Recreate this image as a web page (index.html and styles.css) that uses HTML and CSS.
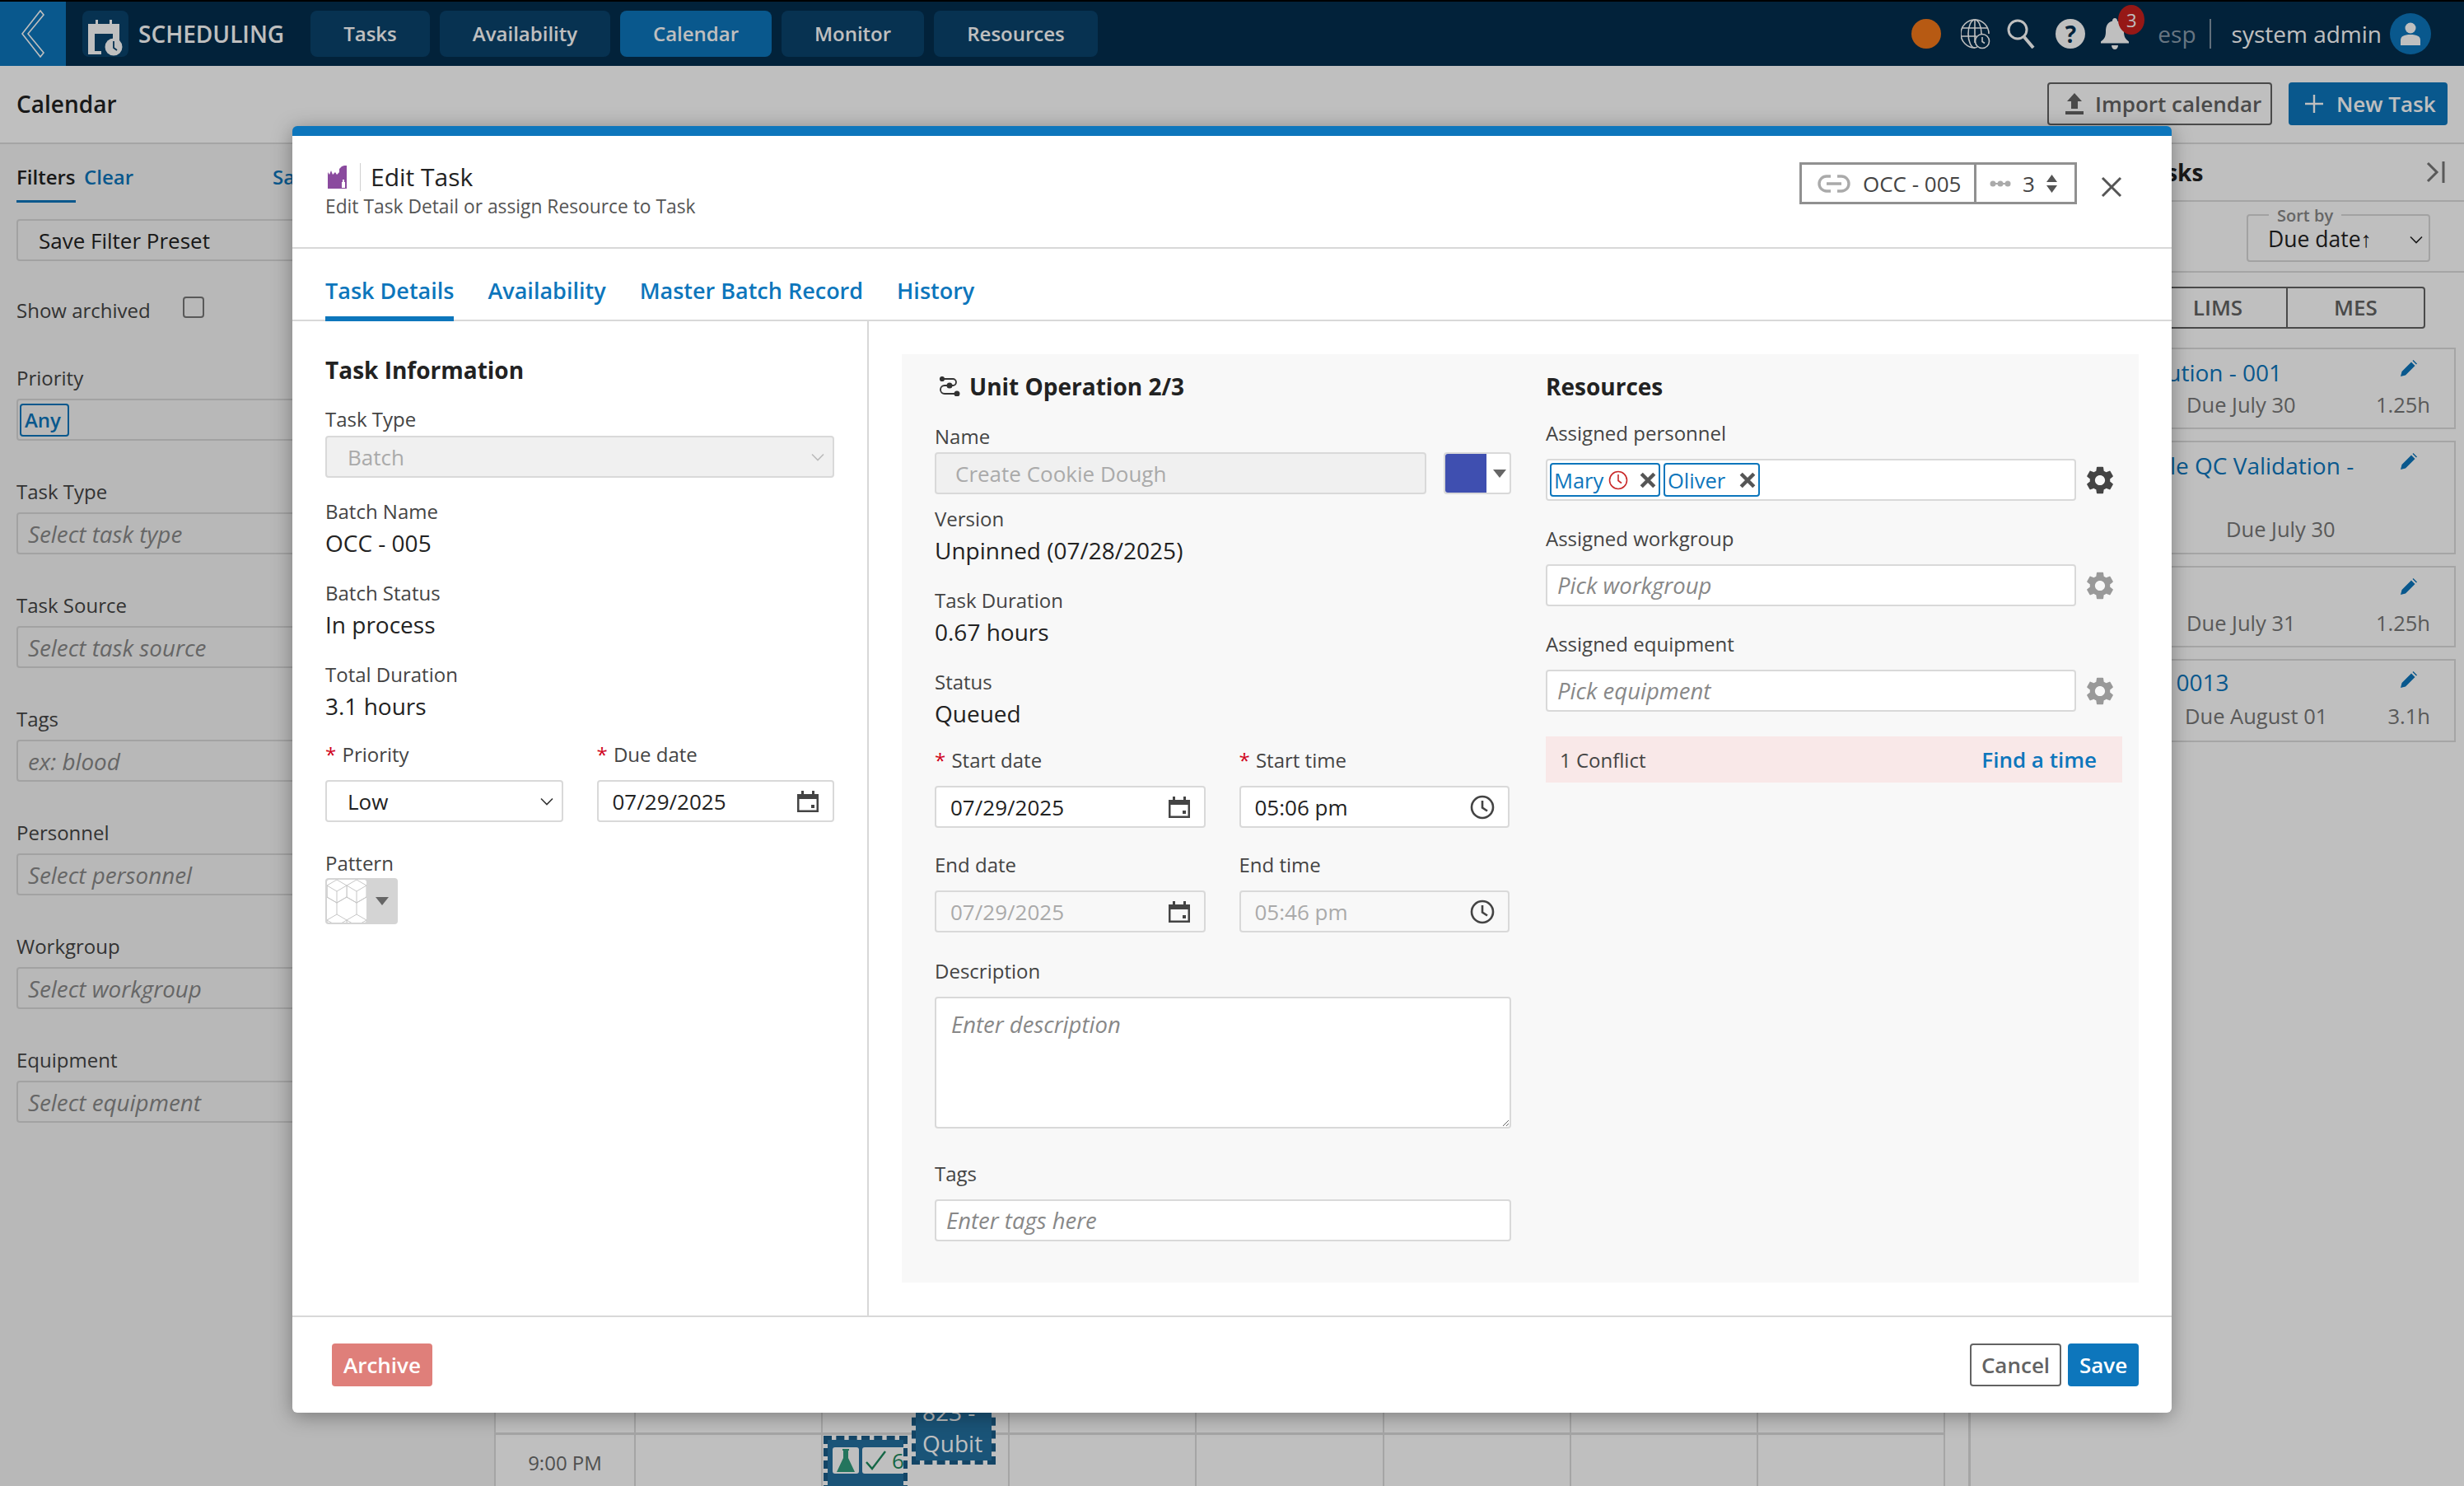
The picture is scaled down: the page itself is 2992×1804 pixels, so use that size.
FILE: index.html
```html
<!DOCTYPE html>
<html lang="en">
<head>
    <meta charset="UTF-8">
    <meta name="viewport" content="width=device-width, initial-scale=1.0">
    <title>Scheduling - Calendar</title>
    <link rel="stylesheet" href="styles.css">
</head>
<body>
    <svg class="defs" width="0" height="0">
        <symbol id="gear" viewBox="2.4 2 19.2 20"><path d="M19.14 12.94c.04-.3.06-.61.06-.94 0-.32-.02-.64-.07-.94l2.03-1.58a.49.49 0 0 0 .12-.61l-1.92-3.32a.488.488 0 0 0-.59-.22l-2.39.96c-.5-.38-1.03-.7-1.62-.94l-.36-2.54a.484.484 0 0 0-.48-.41h-3.84c-.24 0-.43.17-.47.41l-.36 2.54c-.59.24-1.13.57-1.62.94l-2.39-.96c-.22-.08-.47 0-.59.22L2.74 8.87c-.12.21-.08.47.12.61l2.03 1.58c-.05.3-.09.63-.09.94s.02.64.07.94l-2.03 1.58a.49.49 0 0 0-.12.61l1.92 3.32c.12.22.37.29.59.22l2.39-.96c.5.38 1.03.7 1.62.94l.36 2.54c.05.24.24.41.48.41h3.84c.24 0 .44-.17.47-.41l.36-2.54c.59-.24 1.13-.56 1.62-.94l2.39.96c.22.08.47 0 .59-.22l1.92-3.32c.12-.22.07-.47-.12-.61l-2.01-1.58zM12 15.6c-1.98 0-3.6-1.62-3.6-3.6s1.62-3.6 3.6-3.6 3.6 1.62 3.6 3.6-1.62 3.6-3.6 3.6z" fill="currentColor"/></symbol>
        <symbol id="cal" viewBox="0 0 28 28"><path d="M1 5h5V1h3v4h10V1h3v4h5v22H1zM3.5 11v13.5h21V11zM18 18h4v4h-4z" fill="currentColor" fill-rule="evenodd"/></symbol>
        <symbol id="clock" viewBox="0 0 30 30"><circle cx="15" cy="15" r="13" fill="none" stroke="currentColor" stroke-width="2.6"/><path d="M15 7v8.5l6 4" fill="none" stroke="currentColor" stroke-width="2.6"/></symbol>
        <symbol id="chev" viewBox="0 0 16 10"><path d="M1 1.5l7 7 7-7" fill="none" stroke="currentColor" stroke-width="1.6"/></symbol>
        <symbol id="cross" viewBox="1 1 18 18"><path d="M3 3l14 14M17 3L3 17" fill="none" stroke="currentColor" stroke-width="4"/></symbol>
        <symbol id="pencil" viewBox="0 0 20 20"><path d="M0 20l1.5-6L13 2.5l4.5 4.5L6 18.5zM14.5 1l1-1L20 4.500l-1 1z" fill="currentColor"/></symbol>
    </svg>

    <div class="page">
        <header class="topbar">
            <div class="back">
                <svg width="30" height="58" viewBox="0 0 30 58"><path d="M24 1l4 5L9 29l19 23-4 5L2 29z" fill="none" stroke="#fff" stroke-width="1.6"/></svg>
            </div>
            <div class="app-icon">
                <svg width="42" height="44" viewBox="0 0 42 44"><path d="M9 0h3v5h14V0h3v5h9v20h-8V17H8v21h8v4H0V5h9z" fill="#fff"/><circle cx="31" cy="33" r="10.500" fill="#fff"/><path d="M31 26v8l4 3" fill="none" stroke="#0a436d" stroke-width="1.800"/></svg>
            </div>
            <div class="app-name">SCHEDULING</div>
            <nav class="nav">
                <a class="nav-tab tab-tasks">Tasks</a>
                <a class="nav-tab tab-avail">Availability</a>
                <a class="nav-tab tab-cal active">Calendar</a>
                <a class="nav-tab tab-mon">Monitor</a>
                <a class="nav-tab tab-res">Resources</a>
            </nav>
            <div class="top-right">
                <span class="status-dot"></span>
                <svg class="top-icon globe" width="36" height="38" viewBox="0 0 36 38" fill="none" stroke="#fff" stroke-width="1.6"><path d="M17 36A17 17 0 1 1 34 19"/><ellipse cx="17" cy="19" rx="8" ry="17"/><path d="M17 2v28M2 12h30M1 22h18"/><circle cx="26" cy="28" r="8.5" fill="#032e4e"/><path d="M26 23v5.500l3 2"/></svg>
                <svg class="top-icon search" width="34" height="36" viewBox="0 0 34 36" fill="none" stroke="#fff" stroke-width="3"><circle cx="13" cy="13" r="11"/><path d="M21 22l11 13" stroke-width="4"/></svg>
                <span class="help">?</span>
                <div class="bell">
                    <svg width="34" height="38" viewBox="0 0 34 38"><path d="M17 0c2 0 3 1.500 3 3.500 6 1.500 8 6 8 13 0 6 2 9 6 12v2H0v-2c4-3 6-6 6-12 0-7 2-11.500 8-13C14 1.500 15 0 17 0zM13 33h8c0 3-2 5-4 5s-4-2-4-5z" fill="#fff"/></svg>
                    <span class="badge">3</span>
                </div>
                <span class="lang">esp</span>
                <span class="user">system admin</span>
                <span class="avatar">
                    <svg width="26" height="30" viewBox="0 0 26 30"><circle cx="13" cy="8" r="6.500" fill="#fff"/><path d="M1 29V23c0-5 4-7 12-7s12 2 12 7v6z" fill="#fff"/></svg>
                </span>
            </div>
        </header>

        <div class="subhead">
            <h1>Calendar</h1>
            <div class="subhead-actions">
                <button class="btn-outline">
                    <svg width="22" height="26" viewBox="0 0 22 26"><path d="M11 0l9 10h-5v9H7v-9H2zM0 22h22v4H0z" fill="currentColor"/></svg>
                    Import calendar
                </button>
                <button class="btn-primary">
                    <svg width="22" height="22" viewBox="0 0 22 22"><path d="M11 0v22M0 11h22" stroke="#fff" stroke-width="2.400"/></svg>
                    New Task
                </button>
            </div>
        </div>

        <div class="main">
            <aside class="filters">
                <div class="filters-head">
                    <span class="filters-tab">Filters</span>
                    <a class="link">Clear</a>
                    <a class="link save-link">Save</a>
                </div>
                <div class="filter-box preset">Save Filter Preset</div>
                <div class="show-archived"><span>Show archived</span><span class="checkbox"></span></div>
                <div class="filter"><label>Priority</label><div class="filter-box"><span class="any">Any</span></div></div>
                <div class="filter"><label>Task Type</label><div class="filter-box ph">Select task type</div></div>
                <div class="filter"><label>Task Source</label><div class="filter-box ph">Select task source</div></div>
                <div class="filter"><label>Tags</label><div class="filter-box ph">ex: blood</div></div>
                <div class="filter"><label>Personnel</label><div class="filter-box ph">Select personnel</div></div>
                <div class="filter"><label>Workgroup</label><div class="filter-box ph">Select workgroup</div></div>
                <div class="filter"><label>Equipment</label><div class="filter-box ph">Select equipment</div></div>
            </aside>

            <section class="calendar">
                <div class="cal-grid">
                    <div class="cal-row tall">
                        <div class="cal-cell"></div><div class="cal-cell"></div><div class="cal-cell"></div><div class="cal-cell"></div>
                        <div class="cal-cell"></div><div class="cal-cell"></div><div class="cal-cell"></div><div class="cal-cell"></div>
                    </div>
                    <div class="cal-row short">
                        <div class="cal-cell time">9:00 PM</div><div class="cal-cell"></div><div class="cal-cell"></div><div class="cal-cell"></div>
                        <div class="cal-cell"></div><div class="cal-cell"></div><div class="cal-cell"></div><div class="cal-cell"></div>
                    </div>
                    <div class="event event-qubit">823 -<br>Qubit</div>
                    <div class="event event-check">
                        <span class="event-tag flask">
                            <svg width="22" height="28" viewBox="0 0 22 28"><path d="M7 0h8v2h-1v9l8 17H0l8-17V2H7z" fill="#2f9c7c"/></svg>
                        </span>
                        <span class="event-tag check">
                            <svg width="26" height="24" viewBox="0 0 26 24"><path d="M1 14l7 8L24 1" fill="none" stroke="#1c8a5e" stroke-width="2.400"/></svg>
                            <span>6</span>
                        </span>
                    </div>
                </div>
            </section>

            <aside class="tasks">
                <div class="tasks-head"><span>Tasks</span>
                    <svg width="24" height="26" viewBox="0 0 24 26"><path d="M2 2l11 11L2 24" fill="none" stroke="#777" stroke-width="3"/><path d="M21 0v26" stroke="#777" stroke-width="3"/></svg>
                </div>
                <div class="tasks-sort">
                    <div class="sort-box">
                        <span class="sort-legend">Sort by</span>
                        <span>Due date↑</span>
                        <svg class="sort-chev" width="16" height="10"><use href="#chev"/></svg>
                    </div>
                </div>
                <div class="seg">
                    <span class="seg-item">All</span><span class="seg-item">LIMS</span><span class="seg-item">MES</span>
                </div>
                <div class="task-card">
                    <a class="task-title">Resolution - 001</a>
                    <div class="task-meta"><span class="due">Due July 30</span><span>1.25h</span></div>
                    <svg class="pencil" width="20" height="20"><use href="#pencil"/></svg>
                </div>
                <div class="task-card wrap">
                    <a class="task-title">Sample QC Validation -<br>002</a>
                    <div class="task-meta"><span class="due due-mid">Due July 30</span></div>
                    <svg class="pencil" width="20" height="20"><use href="#pencil"/></svg>
                </div>
                <div class="task-card">
                    <a class="task-title">Assay</a>
                    <div class="task-meta"><span class="due">Due July 31</span><span>1.25h</span></div>
                    <svg class="pencil" width="20" height="20"><use href="#pencil"/></svg>
                </div>
                <div class="task-card last">
                    <a class="task-title">Batch 0013</a>
                    <div class="task-meta"><span class="due due-aug">Due August 01</span><span>3.1h</span></div>
                    <svg class="pencil" width="20" height="20"><use href="#pencil"/></svg>
                </div>
            </aside>
        </div>
    </div>

    <div class="backdrop"></div>

    <div class="modal">
        <div class="modal-head">
            <div>
                <div class="modal-title">
                    <svg class="factory" width="30" height="30" viewBox="0 0 30 30"><path d="M3 9l2 3 2-5 2 5 3-3 2 3 3-3v-4l3-3 3-1h3v28H3z" fill="#8a4a9e"/><path d="M20 21h1v-3h2v3h1v7h-4z" fill="#fff"/></svg>
                    <span class="title-text">Edit Task</span>
                </div>
                <div class="modal-sub">Edit Task Detail or assign Resource to Task</div>
            </div>
            <div class="head-right">
                <div class="batch-box">
                    <div class="batch-name">
                        <svg width="40" height="22" viewBox="0 0 40 22" fill="none" stroke="#aaa" stroke-width="3.400"><path d="M16 2H11a9 9 0 0 0 0 18h5M24 2h5a9 9 0 0 1 0 18h-5M11 11h18"/></svg>
                        <span>OCC - 005</span>
                    </div>
                    <div class="batch-step">
                        <svg width="26" height="10" viewBox="0 0 26 10"><path d="M2 5h22" stroke="#aaa" stroke-width="2"/><circle cx="4" cy="5" r="3.500" fill="#aaa"/><circle cx="13" cy="5" r="3.500" fill="#aaa"/><circle cx="22" cy="5" r="3.500" fill="#aaa"/></svg>
                        <span>3</span>
                        <svg width="13" height="22" viewBox="0 0 13 22"><path d="M6.500 0L13 9H0zM0 13h13l-6.500 9z" fill="#555"/></svg>
                    </div>
                </div>
                <svg class="close" width="26" height="26" viewBox="0 0 26 26"><path d="M2 2l22 22M24 2L2 24" stroke="#555" stroke-width="3"/></svg>
            </div>
        </div>

        <div class="modal-tabs">
            <a class="modal-tab active">Task Details</a>
            <a class="modal-tab">Availability</a>
            <a class="modal-tab">Master Batch Record</a>
            <a class="modal-tab">History</a>
        </div>

        <div class="modal-body">
            <div class="info-col">
                <h3 class="info-title">Task Information</h3>
                <div class="field">
                    <label>Task Type</label>
                    <div class="control disabled select">Batch<svg class="chev" width="16" height="10"><use href="#chev"/></svg></div>
                </div>
                <div class="field"><label>Batch Name</label><div class="value">OCC - 005</div></div>
                <div class="field"><label>Batch Status</label><div class="value">In process</div></div>
                <div class="field tight"><label>Total Duration</label><div class="value">3.1 hours</div></div>
                <div class="two-col info-two">
                    <div class="field-sm">
                        <label class="gap"><i>*</i> Priority</label>
                        <div class="control select">Low<svg class="chev dark" width="16" height="10"><use href="#chev"/></svg></div>
                    </div>
                    <div class="field-sm">
                        <label class="gap"><i>*</i> Due date</label>
                        <div class="control date">07/29/2025<svg class="ic" width="28" height="28"><use href="#cal"/></svg></div>
                    </div>
                </div>
                <div class="pattern-field">
                    <label>Pattern</label>
                    <div class="pattern">
                        <svg class="pattern-swatch" width="48" height="52" viewBox="0 0 48 52">
                            <defs>
                                <pattern id="cubes" width="24" height="42" patternUnits="userSpaceOnUse">
                                    <path d="M0 7l12-7 12 7M0 7v14l12 7 12-7V7M0 7l12 7 12-7M12 14v14M12 28v14M0 49l12-7 12 7M0 21v-14M24 21l-12 7-12-7" fill="none" stroke="#c6c6c6" stroke-width="1"/>
                                </pattern>
                            </defs>
                            <rect width="48" height="52" fill="url(#cubes)"/>
                        </svg>
                        <span class="caret"></span>
                    </div>
                </div>
            </div>

            <div class="detail-panel">
                <div class="op-col">
                    <h3 class="op-title">
                        <svg width="26" height="24" viewBox="0 0 26 24" fill="none" stroke="#333" stroke-width="1.800"><path d="M1 3h16a4 4 0 0 1 0 8H7a4.500 4.500 0 0 0 0 10h14"/><circle cx="4" cy="3" r="2.200" fill="#333"/><circle cx="13" cy="11" r="2.600" fill="#333"/><circle cx="22" cy="21" r="2.600" fill="#333"/></svg>
                        Unit Operation 2/3
                    </h3>
                    <div class="op-name">
                        <label>Name</label>
                        <div class="name-row">
                            <div class="control disabled name-input">Create Cookie Dough</div>
                            <div class="color-pick"><span class="color-swatch"></span><span class="caret"></span></div>
                        </div>
                    </div>
                    <div class="op-val first"><label>Version</label><div class="value">Unpinned (07/28/2025)</div></div>
                    <div class="op-val"><label>Task Duration</label><div class="value">0.67 hours</div></div>
                    <div class="op-val"><label>Status</label><div class="value">Queued</div></div>
                    <div class="two-col op-two start">
                        <div class="field-sm">
                            <label class="gap"><i>*</i> Start date</label>
                            <div class="control date">07/29/2025<svg class="ic" width="28" height="28"><use href="#cal"/></svg></div>
                        </div>
                        <div class="field-sm">
                            <label class="gap"><i>*</i> Start time</label>
                            <div class="control date">05:06 pm<svg class="ic" width="30" height="30"><use href="#clock"/></svg></div>
                        </div>
                    </div>
                    <div class="two-col op-two end">
                        <div class="field-sm">
                            <label class="gap">End date</label>
                            <div class="control date muted">07/29/2025<svg class="ic" width="28" height="28"><use href="#cal"/></svg></div>
                        </div>
                        <div class="field-sm">
                            <label class="gap">End time</label>
                            <div class="control date muted">05:46 pm<svg class="ic" width="30" height="30"><use href="#clock"/></svg></div>
                        </div>
                    </div>
                    <div class="op-desc">
                        <label class="gap">Description</label>
                        <div class="textarea">Enter description</div>
                    </div>
                    <div class="op-tags">
                        <label class="gap">Tags</label>
                        <div class="control plain ph">Enter tags here</div>
                    </div>
                </div>

                <div class="res-col">
                    <h3 class="res-title">Resources</h3>
                    <div class="res-field first">
                        <label class="gap">Assigned personnel</label>
                        <div class="res-row">
                            <div class="control plain chips">
                                <span class="chip">Mary
                                    <svg class="chip-clock" width="24" height="24" viewBox="0 0 24 24" fill="none" stroke="#c92a2a" stroke-width="1.600"><circle cx="12" cy="12" r="10.500"/><path d="M12 5v7.500l4 3"/></svg>
                                    <svg class="chip-x" width="20" height="20"><use href="#cross"/></svg>
                                </span>
                                <span class="chip oliver">Oliver
                                    <svg class="chip-x" width="20" height="20"><use href="#cross"/></svg>
                                </span>
                            </div>
                            <svg class="gear" width="34" height="34"><use href="#gear"/></svg>
                        </div>
                    </div>
                    <div class="res-field">
                        <label class="gap">Assigned workgroup</label>
                        <div class="res-row">
                            <div class="control plain ph">Pick workgroup</div>
                            <svg class="gear off" width="34" height="34"><use href="#gear"/></svg>
                        </div>
                    </div>
                    <div class="res-field">
                        <label class="gap">Assigned equipment</label>
                        <div class="res-row">
                            <div class="control plain ph">Pick equipment</div>
                            <svg class="gear off" width="34" height="34"><use href="#gear"/></svg>
                        </div>
                    </div>
                    <div class="conflict"><span>1 Conflict</span><a class="find-time">Find a time</a></div>
                </div>
            </div>
        </div>

        <div class="modal-foot">
            <button class="btn-archive">Archive</button>
            <div class="foot-right">
                <button class="btn-cancel">Cancel</button>
                <button class="btn-save">Save</button>
            </div>
        </div>
    </div>
</body>
</html>
```

FILE: styles.css
```css
* {
    margin: 0;
    padding: 0;
    box-sizing: border-box;
    font-family: 'Open Sans', 'Liberation Sans', sans-serif;
}

html, body {
    height: 100%;
    overflow: hidden;
}

body {
    background: #fff;
    color: #222;
    font-size: 24px;
    position: relative;
}

label {
    display: block;
    line-height: 36px;
    color: #444;
}

label i {
    color: #d0021b;
    font-style: normal;
    margin-right: 1px;
}

button {
    font-size: 26px;
    font-weight: 600;
    cursor: pointer;
}

.defs {
    position: absolute;
}

.page {
    height: 100%;
    display: flex;
    flex-direction: column;
}

/* top bar */
.topbar {
    height: 80px;
    flex: none;
    background: #032e4e;
    border-top: 2px solid #000;
    display: flex;
    align-items: center;
    color: #fff;
}

.back {
    width: 80px;
    height: 78px;
    background: #0d76bc;
    display: flex;
    align-items: center;
    justify-content: center;
    margin-right: 20px;
}

.app-icon {
    width: 56px;
    height: 56px;
    background: #0a436d;
    border-radius: 8px;
    display: flex;
    align-items: flex-end;
    justify-content: center;
    padding-bottom: 1px;
}

.app-name {
    font-size: 28px;
    font-weight: 600;
    margin-left: 12px;
    width: 209px;
}

.nav {
    display: flex;
    gap: 12px;
}

.nav-tab {
    height: 56px;
    line-height: 56px;
    text-align: center;
    background: #0a436d;
    border-radius: 8px;
    font-weight: 600;
    font-size: 24px;
}

.nav-tab.active {
    background: #0d76bc;
}

.tab-tasks { width: 145px; }
.tab-avail { width: 207px; }
.tab-cal { width: 184px; }
.tab-mon { width: 173px; }
.tab-res { width: 199px; }

.top-right {
    margin-left: auto;
    display: flex;
    align-items: center;
    padding-right: 40px;
}

.status-dot {
    width: 36px;
    height: 36px;
    border-radius: 50%;
    background: #f5791a;
    margin-right: 24px;
}

.search {
    margin-left: 20px;
}

.help {
    width: 36px;
    height: 36px;
    margin-left: 25px;
    border-radius: 50%;
    background: #fff;
    color: #032e4e;
    font-size: 28px;
    font-weight: 700;
    line-height: 36px;
    text-align: center;
}

.bell {
    position: relative;
    margin-left: 19px;
    height: 38px;
}

.badge {
    position: absolute;
    left: 21px;
    top: -16px;
    width: 32px;
    height: 36px;
    border-radius: 50%;
    background: #c9211e;
    font-size: 22px;
    line-height: 36px;
    text-align: center;
}

.lang {
    margin-left: 35px;
    padding-right: 16px;
    border-right: 2px solid #8295a5;
    font-size: 28px;
    line-height: 36px;
    color: #8a9cac;
}

.user {
    margin-left: 25px;
    font-size: 28px;
}

.avatar {
    width: 50px;
    height: 50px;
    margin-left: 10px;
    border-radius: 50%;
    background: #0d76bc;
    display: flex;
    align-items: center;
    justify-content: center;
}

/* sub header */
.subhead {
    height: 95px;
    flex: none;
    border-bottom: 2px solid #ddd;
    display: flex;
    align-items: flex-start;
    justify-content: space-between;
    padding: 20px 20px 0;
}

.subhead h1 {
    font-size: 28px;
    font-weight: 600;
    line-height: 52px;
}

.subhead-actions {
    display: flex;
    gap: 20px;
}

.subhead button {
    height: 52px;
    display: flex;
    align-items: center;
    border-radius: 4px;
}

.btn-outline {
    background: #fff;
    border: 2px solid #636363;
    color: #636363;
    width: 273px;
    padding-left: 20px;
    gap: 14px;
}

.btn-primary {
    background: #0d76bc;
    border: 0;
    color: #fff;
    width: 193px;
    padding-left: 20px;
    gap: 16px;
}

.main {
    flex: 1;
    display: flex;
    min-height: 0;
}

/* left filters */
.filters {
    width: 600px;
    flex: none;
    background: #f6f6f6;
    padding: 0 20px;
}

.filters-head {
    display: flex;
    align-items: flex-start;
    gap: 10px;
    padding-top: 22px;
    line-height: 36px;
    height: 71px;
}

.filters-tab {
    font-weight: 600;
    height: 49px;
    width: 72px;
    border-bottom: 3px solid #0d76bc;
}

.link {
    color: #0d76bc;
    font-weight: 600;
}

.save-link {
    margin-left: 159px;
}

.filter-box {
    height: 51px;
    border: 2px solid #d9d9d9;
    border-radius: 4px;
    background: #f6f6f6;
    font-size: 26px;
    display: flex;
    align-items: center;
    padding: 0 12px;
}

.filter-box.preset {
    margin-top: 20px;
    padding-left: 25px;
}

.filter-box.ph {
    font-style: italic;
    font-size: 27.8px;
    color: #888;
}

.show-archived {
    display: flex;
    align-items: center;
    height: 36px;
    margin-top: 41px;
    margin-bottom: 47px;
    color: #444;
}

.checkbox {
    width: 26px;
    height: 26px;
    margin: -6px 0 0 39px;
    border: 2px solid #777;
    border-radius: 4px;
}

.filter {
    margin-bottom: 44px;
}

.filter label {
    margin-bottom: 7px;
}

.any {
    width: 60px;
    height: 40px;
    border: 2px solid #0d76bc;
    border-radius: 4px;
    color: #0d76bc;
    font-size: 24px;
    font-weight: 600;
    line-height: 36px;
    padding-left: 4px;
    margin-left: -10px;
}

/* calendar */
.calendar {
    flex: 1;
    min-width: 0;
    display: flex;
    flex-direction: column;
    justify-content: flex-end;
    border-left: 2px solid #dcdcdc;
    border-right: 3px solid #dcdcdc;
    padding-right: 28px;
    padding-bottom: 4px;
}

.cal-grid {
    position: relative;
}

.cal-row {
    display: grid;
    grid-template-columns: 170px repeat(7, 1fr);
}

.cal-row.tall {
    height: 120px;
    border-bottom: 3px solid #dcdcdc;
}

.cal-row.short {
    height: 58px;
}

.cal-cell {
    border-right: 2px solid #dcdcdc;
}

.cal-cell.time {
    text-align: center;
    color: #6b6b6b;
    font-size: 24px;
    line-height: 68px;
}

.event {
    position: absolute;
    border: 5px dashed #1a5c88;
    background: #2370a0;
    background-clip: padding-box;
    color: #fff;
}

.event-qubit {
    left: 505px;
    top: 20px;
    width: 102px;
    height: 136px;
    padding: 48px 0 0 8px;
    font-size: 28px;
    line-height: 38px;
    overflow: hidden;
}

.event-check {
    left: 398px;
    top: 121px;
    width: 102px;
    height: 100px;
    display: flex;
    gap: 4px;
    padding: 9px 0 0 6px;
    overflow: hidden;
}

.event-tag {
    height: 32px;
    background: #fff;
    border-radius: 3px;
    display: flex;
    align-items: center;
    justify-content: center;
}

.flask {
    width: 32px;
    flex: none;
}

.check {
    width: 60px;
    flex: none;
    gap: 6px;
    color: #1c8a5e;
    font-size: 26px;
    justify-content: flex-start;
    padding-left: 4px;
}

/* right task list */
.tasks {
    width: 599px;
    flex: none;
    padding: 0 10px 0 17px;
    font-size: 25.5px;
}

.tasks-head {
    height: 70px;
    margin: 0 -10px 0 -17px;
    padding: 0 22px 0 204px;
    border-bottom: 2px solid #dcdcdc;
    display: flex;
    align-items: center;
    justify-content: space-between;
    font-weight: 700;
    font-size: 28px;
}

.tasks-sort {
    height: 86px;
    margin: 0 -10px 0 -17px;
    padding: 15px 41px 0 0;
    border-bottom: 2px solid #dcdcdc;
    display: flex;
    justify-content: flex-end;
}

.sort-box {
    position: relative;
    width: 223px;
    height: 58px;
    border: 2px solid #d9d9d9;
    border-radius: 4px;
    font-size: 26.5px;
    line-height: 56px;
    padding-left: 24px;
}

.sort-legend {
    position: absolute;
    left: 25px;
    top: -13px;
    padding: 0 10px;
    background: #fff;
    color: #888;
    font-size: 20px;
    font-weight: 600;
    line-height: 26px;
}

.sort-chev {
    position: absolute;
    right: 7px;
    top: 24px;
    color: #222;
}

.seg {
    display: flex;
    margin: 17px 37px 23px 31px;
    height: 51px;
    border: 2px solid #636363;
    border-radius: 4px;
}

.seg-item {
    flex: 1;
    text-align: center;
    line-height: 47px;
    font-size: 26px;
    font-weight: 600;
    color: #636363;
}

.seg-item + .seg-item {
    border-left: 2px solid #636363;
}

.task-card {
    position: relative;
    height: 99px;
    margin-bottom: 14px;
    padding: 9px 0 0 149px;
    border: 2px solid #dcdcdc;
    line-height: 38px;
}

.task-card.wrap {
    height: 138px;
}

.task-card.last {
    height: 101px;
    padding-top: 7px;
}

.task-title {
    display: block;
    height: 38px;
    color: #0d76bc;
    font-size: 28px;
}

.last .task-title {
    height: 40px;
}

.wrap .task-title {
    height: 76px;
}

.task-meta {
    display: flex;
    justify-content: space-between;
    padding-right: 29px;
    color: #777;
    line-height: 40px;
}

.due {
    margin-left: 94px;
}

.due-mid {
    margin-left: 142px;
}

.due-aug {
    margin-left: 92px;
}

.pencil {
    position: absolute;
    right: 45px;
    top: 13px;
    color: #0d76bc;
}

/* overlay */
.backdrop {
    position: absolute;
    inset: 0;
    background: rgba(0, 0, 0, 0.25);
}

/* modal */
.modal {
    position: absolute;
    left: 355px;
    top: 153px;
    width: 2282px;
    height: 1562px;
    background: #fff;
    border-top: 12px solid #0d76bc;
    border-radius: 6px;
    box-shadow: 0 4px 24px rgba(0, 0, 0, 0.35);
    display: flex;
    flex-direction: column;
    overflow: hidden;
}

.modal-head {
    height: 137px;
    flex: none;
    border-bottom: 2px solid #d8d8d8;
    padding: 30px 60px 0 40px;
    display: flex;
    justify-content: space-between;
    align-items: flex-start;
}

.modal-title {
    display: flex;
    align-items: center;
    height: 40px;
}

.factory {
    margin-right: 12px;
}

.title-text {
    font-size: 30px;
    font-weight: 500;
    line-height: 34px;
    padding-left: 12px;
    border-left: 1px solid #d0d0d0;
}

.modal-sub {
    font-size: 22.8px;
    font-weight: 500;
    line-height: 32px;
    color: #555;
}

.head-right {
    display: flex;
    gap: 29px;
    padding-top: 2px;
}

.batch-box {
    display: flex;
    height: 51px;
    border: 3px solid #909090;
    font-size: 26px;
    color: #444;
}

.batch-name {
    width: 212px;
    border-right: 3px solid #909090;
    display: flex;
    align-items: center;
    gap: 15px;
    padding-left: 19px;
}

.batch-step {
    width: 119px;
    display: flex;
    align-items: center;
    gap: 14px;
    padding-left: 16px;
}

.close {
    margin-top: 17px;
}

.modal-tabs {
    height: 88px;
    flex: none;
    display: flex;
    gap: 41px;
    padding-left: 40px;
    box-shadow: inset 0 -2px #d8d8d8;
}

.modal-tab {
    height: 88px;
    padding-top: 31px;
    line-height: 40px;
    font-size: 27px;
    font-weight: 600;
    color: #0d76bc;
}

.modal-tab.active {
    border-bottom: 6px solid #0d76bc;
}

.modal-body {
    flex: 1;
    min-height: 0;
    display: flex;
}

.info-col {
    width: 700px;
    flex: none;
    padding: 39px 40px 0 40px;
    border-right: 2px solid #d8d8d8;
}

.info-title, .op-title, .res-title {
    font-size: 28px;
    font-weight: 700;
    line-height: 40px;
}

.info-title {
    margin-bottom: 22px;
}

.control {
    height: 51px;
    border: 2px solid #d9d9d9;
    border-radius: 4px;
    background: #fff;
    font-size: 26px;
    display: flex;
    align-items: center;
    position: relative;
}

.control.select {
    padding-left: 25px;
}

.control.date {
    padding: 0 16px 0 17px;
    justify-content: space-between;
    flex: 1;
}

.control.disabled {
    background: #f0f0f0;
    color: #aaa;
}

.control.muted {
    color: #aaa;
    background: transparent;
}

.control.plain {
    flex: 1;
    padding-left: 12px;
}

.control.ph {
    font-style: italic;
    font-size: 27.5px;
    color: #888;
}

.chev {
    position: absolute;
    right: 10px;
    top: 19px;
    color: #bbb;
}

.chev.dark {
    color: #333;
}

.ic {
    color: #444;
    flex: none;
}

.field {
    margin-bottom: 23px;
}

.field .control {
    margin-top: 2px;
}

.field.tight {
    margin-bottom: 21px;
}

.value {
    font-size: 28px;
    line-height: 40px;
}

.two-col {
    display: grid;
    grid-template-columns: 1fr 1fr;
    gap: 41px;
}

label.gap {
    margin-bottom: 13px;
}

.pattern-field {
    margin-top: 32px;
}

.pattern {
    width: 88px;
    height: 56px;
    background: #d4d4d4;
    border-radius: 4px;
    display: flex;
    align-items: center;
    padding-left: 2px;
    gap: 11px;
}

.pattern-swatch {
    background: #fff;
    border-radius: 3px;
}

.caret {
    width: 0;
    height: 0;
    border-left: 8px solid transparent;
    border-right: 8px solid transparent;
    border-top: 10px solid #666;
}

.detail-panel {
    flex: 1;
    min-width: 0;
    margin: 40px;
    padding: 19px 20px 0 40px;
    background: #f8f8f8;
    display: flex;
    gap: 42px;
}

.op-col {
    width: 700px;
    flex: none;
}

.res-col {
    flex: 1;
    min-width: 0;
}

.op-title {
    display: flex;
    align-items: center;
    gap: 11px;
    padding-left: 5px;
    margin-bottom: 23px;
}

.op-name label {
    margin-bottom: 1px;
}

.name-row {
    display: flex;
    justify-content: space-between;
}

.name-input {
    width: 597px;
    padding-left: 23px;
    background: #e9e9e9;
}

.color-pick {
    width: 82px;
    height: 51px;
    border: 2px solid #d9d9d9;
    border-radius: 4px;
    background: #fff;
    display: flex;
    align-items: center;
    gap: 8px;
}

.color-swatch {
    width: 50px;
    height: 47px;
    background: #3f4fb0;
    border-radius: 3px 0 0 3px;
}

.op-val {
    margin-top: 23px;
}

.op-val.first {
    margin-top: 12px;
}

.op-two {
    width: 698px;
}

.op-two.start {
    margin-top: 19px;
}

.op-two.end {
    margin-top: 27px;
}

.op-desc {
    margin-top: 29px;
}

.textarea {
    height: 160px;
    border: 2px solid #d9d9d9;
    border-radius: 4px;
    background: #fff;
    padding: 12px 18px;
    font-size: 27.5px;
    font-style: italic;
    color: #888;
    line-height: 40px;
    resize: vertical;
    overflow: auto;
}

.op-tags {
    margin-top: 37px;
}

.res-title {
    margin-bottom: 19px;
}

.res-field {
    margin-bottom: 28px;
}

.res-row {
    display: flex;
    align-items: center;
    gap: 12px;
    padding-right: 10px;
}

.control.chips {
    padding-left: 3px;
    gap: 4px;
}

.chip {
    height: 41px;
    border: 2px solid #0d76bc;
    border-radius: 4px;
    color: #0d76bc;
    font-size: 25.5px;
    font-style: normal;
    display: flex;
    align-items: center;
    padding: 0 3px 0 3px;
    width: 134px;
}

.chip.oliver {
    width: 117px;
}

.chip-clock {
    margin-left: 6px;
}

.chip-x {
    margin-left: auto;
    color: #555;
}

.gear {
    color: #444;
    flex: none;
}

.gear.off {
    color: #999;
}

.conflict {
    height: 56px;
    margin-top: 30px;
    background: #f9e8e8;
    display: flex;
    align-items: center;
    justify-content: space-between;
    padding: 0 31px 0 17px;
    color: #444;
}

.find-time {
    color: #0d76bc;
    font-size: 26px;
    font-weight: 600;
}

.modal-foot {
    height: 118px;
    flex: none;
    border-top: 2px solid #d8d8d8;
    padding: 0 40px 0 48px;
    display: flex;
    align-items: center;
    justify-content: space-between;
}

.modal-foot button {
    height: 52px;
    border-radius: 4px;
    font-size: 26px;
}

.btn-archive {
    width: 122px;
    background: #df7f7a;
    border: 0;
    color: #fff;
}

.foot-right {
    display: flex;
    gap: 8px;
}

.btn-cancel {
    width: 111px;
    background: #fff;
    border: 2px solid #636363;
    color: #636363;
}

.btn-save {
    width: 86px;
    background: #0d76bc;
    border: 0;
    color: #fff;
}
```
